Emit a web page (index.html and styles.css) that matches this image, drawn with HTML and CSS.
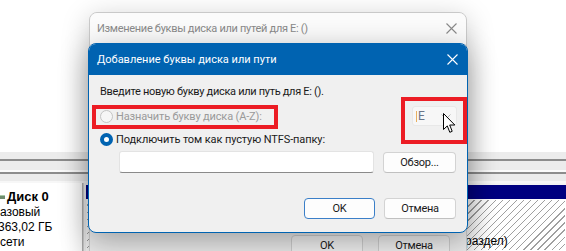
FILE: index.html
```html
<!DOCTYPE html>
<html lang="ru">
<head>
<meta charset="utf-8">
<title>Добавление буквы диска или пути</title>
<link rel="stylesheet" href="styles.css">
</head>
<body>
<div class="dm">
  <div class="dm-top"></div>
  <div class="dm-bar"></div>
  <div class="dm-main">
    <div class="dm-left">
      <div class="disk-name"><span class="disk-ico"></span>Диск 0</div>
      <div class="disk-line">азовый</div>
      <div class="disk-line shift">363,02 ГБ</div>
      <div class="disk-line">сети</div>
    </div>
    <div class="dm-parts">
      <div class="part-head"></div>
      <div class="part-body"><span class="part-label">раздел)</span></div>
    </div>
  </div>
</div>

<div class="win back">
  <div class="back-title">
    <span>Изменение буквы диска или путей для E: ()</span>
    <svg class="x" width="11" height="11" viewBox="0 0 11 11"><path d="M0.5 0.5L10.5 10.5M10.5 0.5L0.5 10.5" stroke="#8a8a8a" stroke-width="1.1" fill="none"/></svg>
  </div>
  <div class="back-body"></div>
  <div class="back-foot">
    <div class="bbtn">OK</div>
    <div class="bbtn">Отмена</div>
  </div>
</div>

<div class="win front">
  <div class="front-title">
    <span>Добавление буквы диска или пути</span>
    <svg class="x" width="11" height="11" viewBox="0 0 11 11"><path d="M0.5 0.5L10.5 10.5M10.5 0.5L0.5 10.5" stroke="#ffffff" stroke-width="1.1" fill="none"/></svg>
  </div>
  <div class="front-body">
    <div class="prompt">Введите новую букву диска или путь для E: ().</div>
    <div class="row r1">
      <div class="opt disabled"><span class="radio"></span>Назначить букву диска (A-Z):</div>
      <div class="combo"><span class="caret"></span><span class="combo-val">E</span>
        <svg class="chev" width="10" height="6" viewBox="0 0 10 6"><path d="M0.5 0.5L5 5L9.5 0.5" stroke="#b8b8b8" stroke-width="1" fill="none"/></svg>
      </div>
    </div>
    <div class="row r2"><div class="opt"><span class="radio on"></span>Подключить том как пустую NTFS-папку:</div></div>
    <div class="row r3"><div class="path"></div><div class="btn browse">Обзор...</div></div>
    <div class="row foot"><div class="btn primary">OK</div><div class="btn">Отмена</div></div>
  </div>
</div>

<div class="mark m1"></div>
<div class="mark m2"></div>
<svg class="cursor" width="13" height="21" viewBox="0 0 13 21"><path d="M0.5 0.5L0.5 16.5L4.3 12.9L6.8 19.3L9.2 18.3L6.7 12L11.8 12Z" fill="#ffffff" stroke="#000000" stroke-width="1" stroke-linejoin="miter"/></svg>
</body>
</html>
```
FILE: styles.css
```css
* { box-sizing: border-box; }
html, body { margin: 0; padding: 0; }
body {
  width: 566px;
  height: 251px;
  overflow: hidden;
  position: relative;
  background: #ffffff;
  font-family: Roboto, "Noto Sans", sans-serif;
  font-size: 11px;
  letter-spacing: -0.25px;
  color: #1a1a1a;
}

/* background: disk management window */
.dm { width: 566px; height: 251px; display: flex; flex-direction: column; letter-spacing: 0; }
.dm-top { height: 152px; background: #ffffff; flex: none; }
.dm-bar {
  height: 31px;
  flex: none;
  background:
    linear-gradient(#ececec 0 7px, #8c8c8c 7px 9px, #ececec 9px 18px, #fafafa 18px 20px, #8c8c8c 20px 22px, #ebebeb 22px 29px, #f7f7f7 29px 31px);
}
.dm-main { flex: 1; display: flex; background: #f3f3f3; }
.dm-left {
  width: 83px;
  background: #ffffff;
  border-right: 1px solid #b0b0b0;
  padding-top: 5px;
  overflow: hidden;
  font-family: "Liberation Sans", Arial, sans-serif;
  font-size: 12px;
  color: #000000;
  flex: none;
}
.disk-name { font-weight: bold; font-size: 13px; line-height: 17px; display: flex; align-items: center; gap: 2px; }
.disk-ico { width: 5px; height: 4px; background: #6e8c6e; border-top: 1px solid #a8c8a8; }
.disk-line { line-height: 15px; }
.shift { margin-left: -2px; }
.dm-parts { flex: 1; padding: 2px 0 0 2px; border-left: 1px solid #d0d0d0; display: flex; flex-direction: column; }
.part-head { height: 14px; background: #000080; flex: none; }
.part-body {
  flex: 1;
  border: 1px solid #ffffff;
  background: repeating-linear-gradient(135deg, #ffffff 0 3.5px, #a0a0a0 3.5px 4.4px, #ffffff 4.4px 5px);
  padding: 34px 0 0 378px;
  font-family: "Liberation Sans", Arial, sans-serif;
  font-size: 12px;
  color: #000000;
}

/* windows */
.win { position: absolute; }
.back {
  left: 89px;
  top: 12px;
  width: 378px;
  height: 262px;
  background: #e9e9e9;
  border: 1px solid #c9c9c9;
  border-radius: 8px;
  box-shadow: 0 6px 28px rgba(0, 0, 0, 0.22);
  display: flex;
  flex-direction: column;
  overflow: hidden;
}
.back-title {
  height: 31px;
  flex: none;
  background: #fbfbfb;
  color: #8a8a8a;
  display: flex;
  align-items: center;
  justify-content: space-between;
  padding: 0 9px 0 7px;
  letter-spacing: -0.3px;
}
.back-body { height: 191px; flex: none; }
.back-foot { display: flex; justify-content: flex-end; gap: 15px; padding-right: 16px; }
.bbtn {
  width: 72px;
  height: 22px;
  border: 1px solid #cdcdcd;
  border-radius: 4px;
  background: #efefef;
  display: flex;
  align-items: flex-start;
  justify-content: center;
  line-height: 14px;
  padding-top: 3px;
}

.front {
  left: 88px;
  top: 43px;
  width: 380px;
  height: 190px;
  background: #f0f0f0;
  border: 1px solid #0063b1;
  border-radius: 8px;
  box-shadow: 0 8px 30px rgba(0, 0, 0, 0.32);
  overflow: hidden;
  display: flex;
  flex-direction: column;
}
.front-title {
  height: 31px;
  flex: none;
  background: #0063b1;
  color: #ffffff;
  display: flex;
  align-items: center;
  justify-content: space-between;
  padding: 0 9px 0 8px;
  font-size: 11px;
  letter-spacing: 0;
}
.front-body { padding: 9px 10px 0 11px; }
.prompt { line-height: 16px; letter-spacing: -0.3px; }
.row { display: flex; align-items: center; }
.r1 { margin-top: 6px; height: 20px; justify-content: space-between; }
.r2 { margin-top: 5px; height: 16px; letter-spacing: -0.1px; }
.r3 { margin-top: 4px; margin-left: 19px; gap: 9px; }
.foot { margin-top: 25px; justify-content: flex-end; gap: 9px; padding-right: 1px; }
.opt { display: flex; align-items: center; gap: 3px; }
.opt.disabled { color: #9a9a9a; letter-spacing: -0.15px; }
.radio {
  width: 13px;
  height: 13px;
  border-radius: 50%;
  border: 1px solid #c4c4c4;
  background: #f6f6f6;
  flex: none;
}
.radio.on { border: 4px solid #0063b1; background: #ffffff; }
.combo {
  width: 45px;
  height: 20px;
  background: #f7f7f7;
  border: 1px solid #e8e8e8;
  border-radius: 3px;
  display: flex;
  align-items: center;
  padding-left: 3px;
  position: relative;
}
.caret { width: 1px; height: 11px; background: #e8b060; margin-right: 1px; }
.combo-val { color: #6a7588; font-size: 12px; }
.chev { position: absolute; right: 5px; top: 7px; }
.path {
  width: 255px;
  height: 22px;
  background: #ffffff;
  border: 1px solid #e3e3e3;
  border-bottom: 1px solid #8a8a8a;
  border-radius: 3px;
}
.btn {
  height: 21px;
  width: 72px;
  background: #fdfdfd;
  border: 1px solid #d3d3d3;
  border-bottom-color: #c0c0c0;
  border-radius: 4px;
  display: flex;
  align-items: center;
  justify-content: center;
}
.browse { width: 73px; }
.primary { width: 71px; border: 1px solid #3b7fc8; }

/* annotation marks */
.mark { position: absolute; border: 4px solid #ec1c24; }
.m1 { left: 92px; top: 105px; width: 186px; height: 24px; }
.m2 { left: 401px; top: 97px; width: 66px; height: 47px; }
.cursor { position: absolute; left: 443px; top: 113px; }
```
